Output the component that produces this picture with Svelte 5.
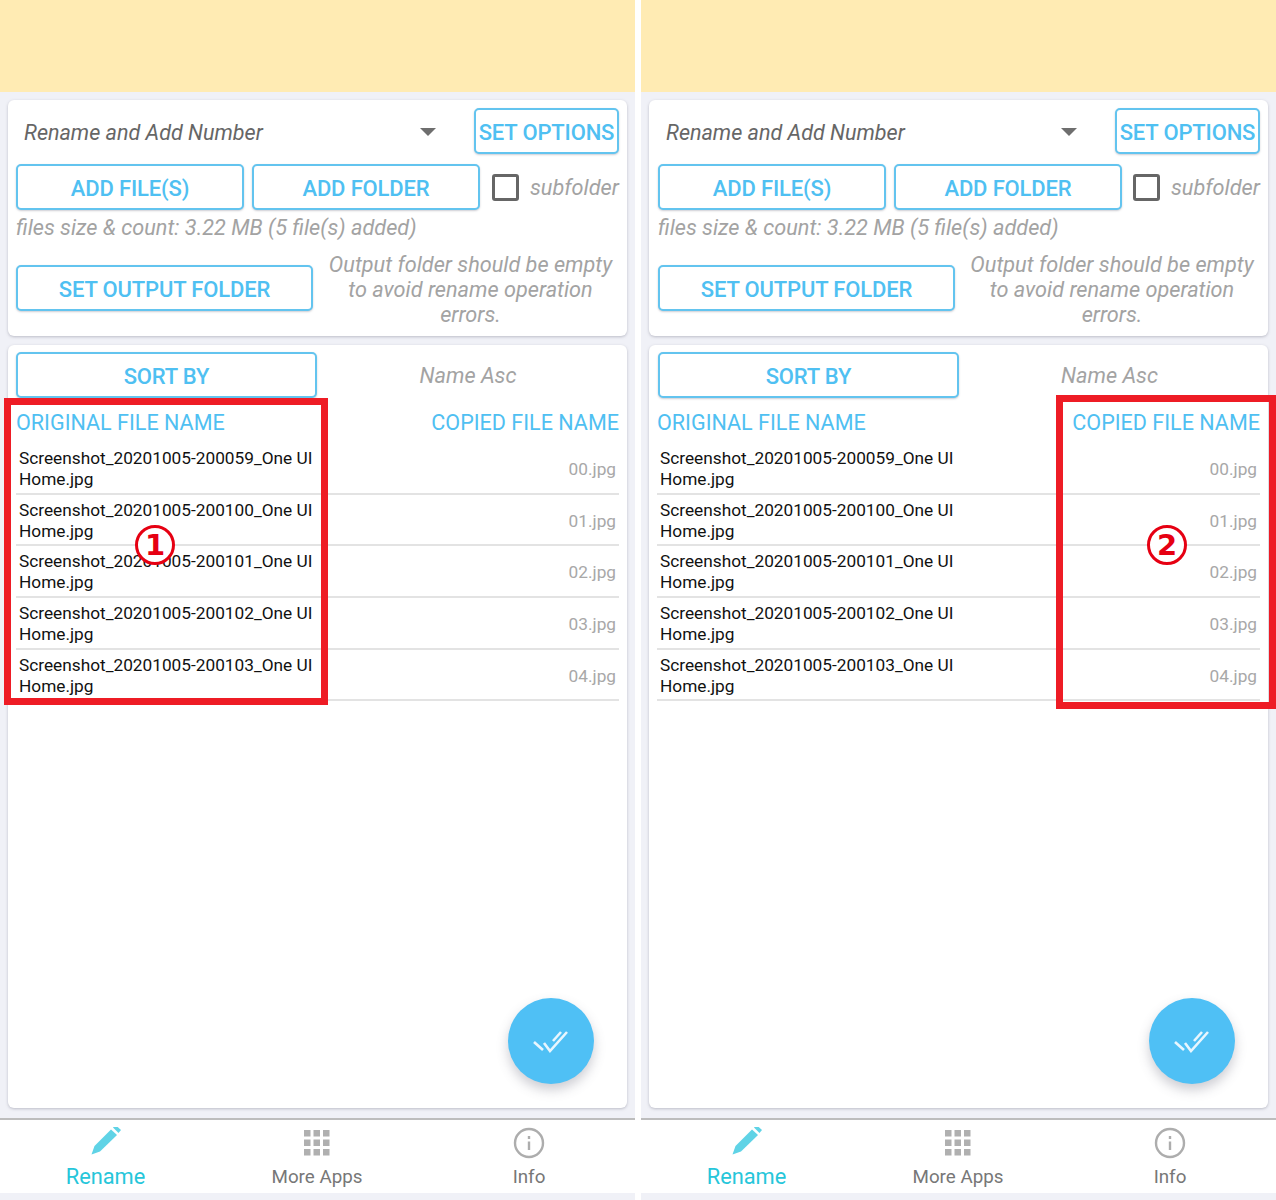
<script lang="ts">
  const files = [
    { original: "Screenshot_20201005-200059_One UI Home.jpg", copied: "00.jpg" },
    { original: "Screenshot_20201005-200100_One UI Home.jpg", copied: "01.jpg" },
    { original: "Screenshot_20201005-200101_One UI Home.jpg", copied: "02.jpg" },
    { original: "Screenshot_20201005-200102_One UI Home.jpg", copied: "03.jpg" },
    { original: "Screenshot_20201005-200103_One UI Home.jpg", copied: "04.jpg" },
  ];
</script>

{#snippet phone(mark: number)}
  <section class="phone" class:right={mark === 2}>
    <div class="banner"></div>

    <div class="card options">
      <div class="row top">
        <div class="select">
          <span>Rename and Add Number</span>
          <i class="caret"></i>
        </div>
        <button class="btn set-options">SET OPTIONS</button>
      </div>
      <div class="row add">
        <button class="btn">ADD FILE(S)</button>
        <button class="btn">ADD FOLDER</button>
        <span class="box"></span>
        <span class="note sub">subfolder</span>
      </div>
      <p class="note count">files size &amp; count: 3.22 MB (5 file(s) added)</p>
      <div class="row output">
        <button class="btn">SET OUTPUT FOLDER</button>
        <p class="note warn">Output folder should be empty to avoid rename operation errors.</p>
      </div>
    </div>

    <div class="card list">
      <div class="row sort">
        <button class="btn">SORT BY</button>
        <span class="note sort-value">Name Asc</span>
      </div>
      <div class="heads">
        <span>ORIGINAL FILE NAME</span>
        <span>COPIED FILE NAME</span>
      </div>
      {#each files as file}
        <div class="file">
          <span class="orig">{file.original}</span>
          <span class="copy">{file.copied}</span>
        </div>
      {/each}
      <div class="fab">
        <svg viewBox="0 0 40 24" width="40" height="24" fill="none" stroke="#e8f6fe" stroke-width="2.6">
          <path d="M3 13l9 8" />
          <path d="M13 14l6 8L36 3" />
          <path d="M22 12l8-9" />
        </svg>
      </div>
    </div>

    <nav class="tabs">
      <div class="tab active">
        <svg viewBox="0 3 32 32" width="32" height="32" fill="#5fd3e6">
          <path d="M1.5 30.5l3-8.5L21 5.500l6 5.500L10 27.500z" />
          <path d="M23 3.500l2.500-2.500 5.500 5-2.500 3z" />
        </svg>
        <span>Rename</span>
      </div>
      <div class="tab">
        <svg viewBox="0 -3 26 32" width="26" height="32" fill="#b0b0b0">
          {#each [0, 9.5, 19] as y}
            {#each [0, 9.5, 19] as x}
              <rect x={x} y={y} width="6.500" height="6.500" />
            {/each}
          {/each}
        </svg>
        <span>More Apps</span>
      </div>
      <div class="tab">
        <svg viewBox="0 0 32 32" width="32" height="32" fill="none" stroke="#adadad" stroke-width="2.400">
          <circle cx="16" cy="16" r="14" />
          <path d="M16 14.500v8.500" />
          <path d="M16 9v3" />
        </svg>
        <span>Info</span>
      </div>
    </nav>

    <div class="marker" class:first={mark === 1} class:second={mark === 2}>
      <b>{mark}</b>
    </div>
  </section>
{/snippet}

<main class="screens">
  {@render phone(1)}
  {@render phone(2)}
</main>

<style>
  :global(body) {
    margin: 0;
    background: #fff;
  }
  .screens {
    display: grid;
    grid-template-columns: 635px 635px;
    gap: 6px;
    height: 1200px;
    overflow: hidden;
    font-family: Roboto, "Liberation Sans", sans-serif;
  }
  .phone {
    position: relative;
    display: flex;
    flex-direction: column;
    height: 1200px;
    background: #f0f1f7;
  }
  .banner {
    height: 92px;
    background: #ffebb3;
    flex-shrink: 0;
  }
  .card {
    background: #fff;
    border-radius: 6px;
    margin: 0 8px;
    box-shadow: 0 1px 3px rgba(90, 90, 110, 0.35);
    box-sizing: border-box;
  }
  .options {
    margin-top: 8px;
    height: 236px;
    padding: 8px 8px 0;
  }
  .right .options {
    padding-left: 9px;
  }
  .row {
    display: flex;
    align-items: center;
  }
  .btn {
    display: block;
    box-sizing: border-box;
    height: 46px;
    padding: 2px 0 0;
    background: #fff;
    border: 2px solid #63c4ef;
    border-radius: 5px;
    box-shadow: 0 1px 2px rgba(90, 90, 110, 0.3);
    color: #4fc0f2;
    font-family: inherit;
    font-size: 22px;
    font-weight: 500;
    letter-spacing: -0.15px;
    white-space: nowrap;
  }
  .select {
    flex: 1;
    display: flex;
    align-items: center;
    justify-content: space-between;
    padding: 2px 38px 0 8px;
    color: #666;
    font-size: 21.55px;
    font-style: italic;
  }
  .caret {
    width: 0;
    height: 0;
    border-left: 8px solid transparent;
    border-right: 8px solid transparent;
    border-top: 8px solid #6e6e6e;
  }
  .set-options {
    width: 145px;
  }
  .add {
    margin-top: 10px;
    gap: 8px;
  }
  .add .btn {
    width: 228px;
  }
  .box {
    box-sizing: border-box;
    width: 27px;
    height: 27px;
    margin-left: 4px;
    border: 3px solid #666;
    border-radius: 3px;
  }
  .right .box {
    margin-left: 3px;
  }
  .note {
    margin: 0;
    color: #a3a3a3;
    font-size: 21.7px;
    font-style: italic;
    line-height: 25px;
  }
  .sub {
    margin-left: 3px;
    white-space: nowrap;
  }
  .count {
    margin-top: 5px;
    white-space: nowrap;
  }
  .output {
    margin-top: 24px;
    gap: 15px;
    align-items: flex-start;
  }
  .output .btn {
    width: 297px;
    flex-shrink: 0;
    margin-top: 1px;
  }
  .warn {
    flex: 1;
    margin-top: -12px;
    padding-right: 6px;
    text-align: center;
  }
  .list {
    position: relative;
    margin-top: 9px;
    height: 763px;
    padding: 7px 8px 0;
  }
  .right .sort {
    padding-left: 1px;
  }
  .sort .btn {
    width: 301px;
    flex-shrink: 0;
  }
  .sort-value {
    flex: 1;
    text-align: center;
  }
  .heads {
    display: flex;
    justify-content: space-between;
    margin-top: 12px;
    color: #4fc0f2;
    font-size: 21.55px;
    line-height: 26px;
  }
  .file {
    box-sizing: border-box;
    display: flex;
    justify-content: space-between;
    align-items: center;
    height: 51.7px;
    padding: 2px 3px 0;
    border-bottom: 2px solid #e3e3e3;
  }
  .heads + .file {
    margin-top: 7px;
  }
  .orig {
    width: 300px;
    color: #111;
    font-size: 17.25px;
    line-height: 21px;
  }
  .copy {
    color: #a8a8a8;
    font-size: 17.25px;
  }
  .fab {
    position: absolute;
    right: 33px;
    bottom: 24px;
    display: flex;
    align-items: center;
    justify-content: center;
    width: 86px;
    height: 86px;
    border-radius: 50%;
    background: #4fc0f5;
    box-shadow: 0 6px 12px rgba(90, 90, 110, 0.3);
  }
  .tabs {
    display: grid;
    grid-template-columns: 211px 212px 212px;
    box-sizing: border-box;
    height: 75px;
    margin-top: 10px;
    background: #fff;
    border-top: 2px solid #bdbdbd;
  }
  .tab {
    display: flex;
    flex-direction: column;
    align-items: center;
    justify-content: flex-end;
    padding-bottom: 4px;
    color: #777;
    font-size: 18.8px;
    line-height: 24px;
    gap: 6px;
  }
  .tab svg {
    display: block;
  }
  .tab.active {
    color: #26c6da;
    font-size: 21.8px;
  }
  .marker {
    position: absolute;
    box-sizing: border-box;
    border: 7px solid #ee1c25;
    pointer-events: none;
  }
  .marker.first {
    left: 4px;
    top: 398px;
    width: 324px;
    height: 307px;
  }
  .marker.second {
    left: 415px;
    top: 395px;
    width: 220px;
    height: 314px;
  }
  .marker b {
    position: absolute;
    display: flex;
    align-items: center;
    justify-content: center;
    box-sizing: border-box;
    width: 40px;
    height: 40px;
    border: 3px solid #e60012;
    border-radius: 50%;
    background: #fff;
    color: #e60012;
    font-family: "DejaVu Sans", sans-serif;
    font-size: 29px;
    font-weight: 700;
  }
  .first b {
    left: 124px;
    top: 120px;
  }
  .second b {
    left: 84px;
    top: 123px;
  }
</style>
